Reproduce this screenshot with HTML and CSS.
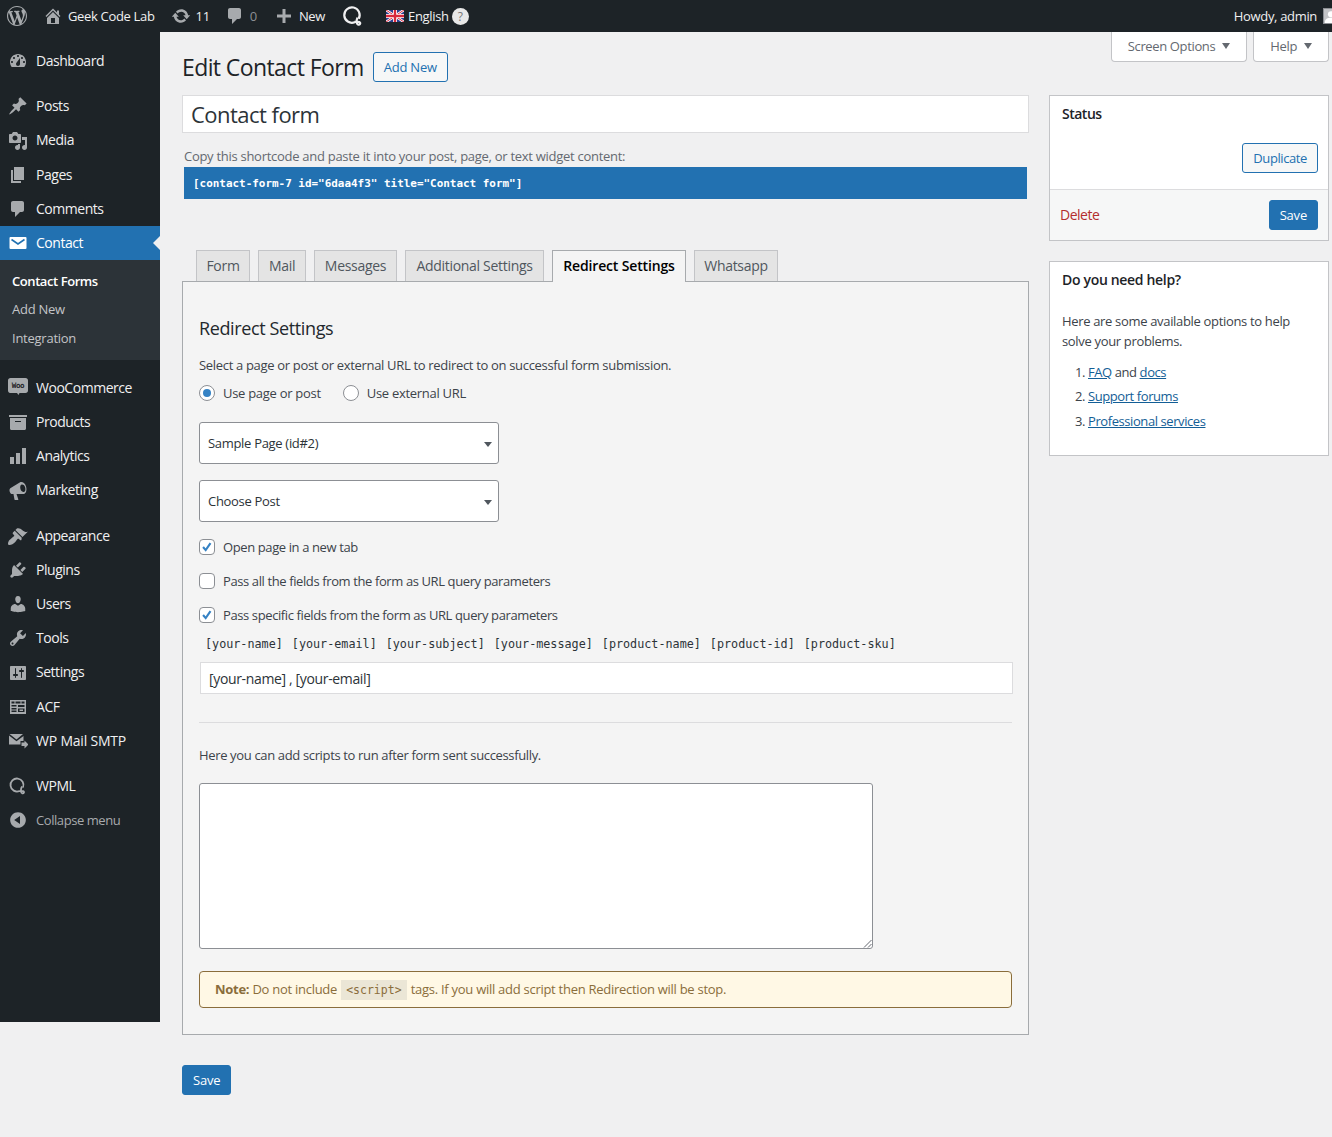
FILE: index.html
```html
<!DOCTYPE html>
<html lang="en">
<head>
  <meta charset="UTF-8" />
  <title>Edit Contact Form</title>
  <link rel="stylesheet" href="styles.css">
</head>
<body>
  <div class="adminbar">
    <div class="bar-left">
      <svg class="bar-logo" viewBox="0 0 20 20"><path d="M20 10c0-5.51-4.49-10-10-10C4.48 0 0 4.49 0 10c0 5.52 4.48 10 10 10 5.51 0 10-4.48 10-10zM7.78 15.37L4.37 6.22c.55-.02 1.17-.08 1.17-.08.5-.06.44-1.13-.06-1.11 0 0-1.45.11-2.37.11-.18 0-.37 0-.58-.01C4.12 2.69 6.87 1.11 10 1.11c2.33 0 4.45.87 6.05 2.34-.68-.11-1.65.39-1.65 1.58 0 .74.45 1.36.9 2.1.35.61.55 1.36.55 2.46 0 1.49-1.4 5-1.4 5l-3.03-8.37c.54-.02.82-.17.82-.17.5-.05.44-1.25-.06-1.22 0 0-1.44.12-2.38.12-.87 0-2.33-.12-2.33-.12-.5-.03-.56 1.2-.06 1.22l.92.08 1.26 3.41zM17.41 10c.24-.64.74-1.87.43-4.25.7 1.29 1.05 2.71 1.05 4.25 0 3.29-1.73 6.24-4.4 7.78.97-2.59 1.94-5.2 2.92-7.78zM6.1 18.09C3.12 16.65 1.11 13.53 1.11 10c0-1.3.23-2.48.72-3.59C3.25 10.3 4.67 14.2 6.1 18.09zm4.03-6.63l2.58 6.98c-.86.29-1.76.45-2.71.45-.79 0-1.57-.11-2.29-.33.81-2.38 1.62-4.74 2.42-7.1z"/></svg>
      <span class="bar-item bar-site"><svg class="bar-icon" viewBox="0 0 20 20"><path d="M16 8.5l1.53 1.53-1.06 1.06L10 4.62l-6.47 6.47-1.06-1.06L10 2.5l4 4v-2h2v4zm-6-2.46l6 5.99V18H4v-5.97zM12 17v-5H8v5h4z"/></svg>Geek Code Lab</span>
      <span class="bar-item bar-updates"><svg class="bar-icon" viewBox="0 0 20 20"><path d="M10.2 3.28c3.53 0 6.43 2.61 6.92 6h2.08l-3.5 4-3.5-4h2.32c-.45-1.97-2.21-3.45-4.32-3.45-1.45 0-2.73.71-3.54 1.78L4.95 5.66C6.23 4.2 8.11 3.28 10.2 3.28zm-.4 13.44c-3.52 0-6.43-2.61-6.92-6H.8l3.5-4c1.17 1.33 2.33 2.67 3.5 4H5.48c.45 1.97 2.21 3.45 4.32 3.45 1.45 0 2.73-.71 3.54-1.78l1.71 1.95c-1.28 1.46-3.15 2.38-5.25 2.38z"/></svg>11</span>
      <span class="bar-item bar-comments"><svg class="bar-icon" viewBox="0 0 20 20"><path d="M5 2h9c1.1 0 2 .9 2 2v7c0 1.1-.9 2-2 2h-2l-5 5v-5H5c-1.1 0-2-.9-2-2V4c0-1.1.9-2 2-2z"/></svg><span class="muted">0</span></span>
      <span class="bar-item bar-new"><svg class="bar-icon" viewBox="0 0 20 20"><path d="M17 8.5v3h-5.5V17h-3v-5.5H3v-3h5.5V3h3v5.5z"/></svg>New</span>
      <svg class="bar-wpml" viewBox="0 0 20 20"><path d="M11.5 15.7A7 7 0 1 1 15.2 12.5"/><path d="M14.2 11.5c-1.4 2.5-1.4 5.5.3 6.3 1.6.6 3-1.5 1.2-2.3-1.3-.5-3.2.2-4.7-.2"/></svg>
      <span class="bar-lang">
        <svg class="flag" viewBox="0 0 18 12"><rect width="18" height="12" fill="#2b3f8f"/><path d="M0 0l18 12M18 0L0 12" stroke="#fff" stroke-width="2.6"/><path d="M0 0l18 12M18 0L0 12" stroke="#d8283c" stroke-width="1"/><path d="M9 0v12M0 6h18" stroke="#fff" stroke-width="4"/><path d="M9 0v12M0 6h18" stroke="#d8283c" stroke-width="2.4"/></svg>
        English<span class="lang-help">?</span>
      </span>
    </div>
    <div class="bar-right">Howdy, admin<span class="avatar"><svg viewBox="0 0 16 16"><rect width="16" height="16" fill="#c3c4c7"/><circle cx="8" cy="6" r="3.5" fill="#fff"/><path d="M1 16c0-5 3-6 7-6s7 1 7 6z" fill="#fff"/></svg></span></div>
  </div>

  <div class="layout">
    <nav class="sidebar">
      <ul class="menu">
        <li class="menu-item"><svg viewBox="0 0 20 20"><path fill-rule="evenodd" d="M3.76 16h12.48c1.1-1.37 1.76-3.11 1.76-5 0-4.42-3.58-8-8-8s-8 3.58-8 8c0 1.89.66 3.63 1.76 5zM10 4c.55 0 1 .45 1 1s-.45 1-1 1-1-.45-1-1 .45-1 1-1zM6 6c.55 0 1 .45 1 1s-.45 1-1 1-1-.45-1-1 .45-1 1-1zm8 0c.55 0 1 .45 1 1s-.45 1-1 1-1-.45-1-1 .45-1 1-1zm-5.37 5.55L12 7v6c0 1.1-.9 2-2 2s-2-.9-2-2c0-.57.24-1.08.63-1.45zM4 10c.55 0 1 .45 1 1s-.45 1-1 1-1-.45-1-1 .45-1 1-1zm12 0c.55 0 1 .45 1 1s-.45 1-1 1-1-.45-1-1 .45-1 1-1z"/></svg>Dashboard</li>
        <li class="menu-sep"></li>
        <li class="menu-item"><svg viewBox="0 0 20 20"><path d="M10.44 3.02l1.82-1.82 6.36 6.35-1.83 1.82c-1.05-.68-2.48-.57-3.41.36l-.75.75c-.92.93-1.04 2.35-.35 3.41l-1.83 1.82-2.41-2.41-2.8 2.79c-.42.42-3.38 2.71-3.8 2.29s1.86-3.39 2.28-3.81l2.79-2.79L4.1 9.36l1.83-1.82c1.05.69 2.48.57 3.4-.36l.75-.75c.93-.92 1.05-2.35.36-3.41z"/></svg>Posts</li>
        <li class="menu-item"><svg viewBox="0 0 20 20"><path fill-rule="evenodd" d="M13 11V4c0-.55-.45-1-1-1h-1.67L9 1H5L3.67 3H2c-.55 0-1 .45-1 1v7c0 .55.45 1 1 1h10c.55 0 1-.45 1-1zM7 4.5c1.38 0 2.5 1.12 2.5 2.5S8.38 9.5 7 9.5 4.5 8.38 4.5 7 5.62 4.5 7 4.5zM14 6h5v10.5c0 1.38-1.12 2.5-2.5 2.5S14 17.88 14 16.5s1.12-2.5 2.5-2.5c.17 0 .34.02.5.05V9h-3V6zm-4 8.05V13h2v3.5c0 1.38-1.12 2.5-2.5 2.5S7 17.88 7 16.5 8.12 14 9.5 14c.17 0 .34.02.5.05z"/></svg>Media</li>
        <li class="menu-item"><svg viewBox="0 0 20 20"><path d="M6 15V2h10v13H6zm-1 1h8v2H3V5h2v11z"/></svg>Pages</li>
        <li class="menu-item"><svg viewBox="0 0 20 20"><path d="M5 2h9c1.1 0 2 .9 2 2v7c0 1.1-.9 2-2 2h-2l-5 5v-5H5c-1.1 0-2-.9-2-2V4c0-1.1.9-2 2-2z"/></svg>Comments</li>
        <li class="menu-item is-current"><svg viewBox="0 0 20 20"><rect x="1.5" y="4" width="17" height="12" rx="1" fill="#fff"/><path d="M3.5 6.5L10 11l6.5-4.5" fill="none" stroke="#2271b1" stroke-width="1.6"/></svg>Contact</li>
        <li class="submenu">
          <div class="sub-item is-active">Contact Forms</div>
          <div class="sub-item">Add New</div>
          <div class="sub-item">Integration</div>
        </li>
        <li class="menu-item"><svg class="woo" viewBox="0 0 20 20"><path d="M2.5 0h15C19 0 20 1 20 2.5v10c0 1.5-1 2.5-2.5 2.5h-6l-1 2-1.5-2h-7C1 15 0 14 0 12.5v-10C0 1 1 0 2.5 0z"/><text x="10" y="10" text-anchor="middle" class="woo-text">Woo</text></svg>WooCommerce</li>
        <li class="menu-item"><svg viewBox="0 0 20 20"><path fill-rule="evenodd" d="M19 3v2H1V3h18zM2 6h16v10.5c0 .83-.67 1.5-1.5 1.5h-13c-.83 0-1.5-.67-1.5-1.5V6zm5 3v1h6V9H7z"/></svg>Products</li>
        <li class="menu-item"><svg viewBox="0 0 20 20"><path d="M18 18V2h-4v16h4zm-6 0V7H8v11h4zm-6 0v-7H2v7h4z"/></svg>Analytics</li>
        <li class="menu-item"><svg viewBox="0 0 20 20"><path fill-rule="evenodd" d="M18.15 5.94c.46 1.62.38 3.22-.02 4.48-.42 1.28-1.26 2.18-2.3 2.48-.16.06-.26.06-.4.06-.06.02-.12.02-.18.02-.06.02-.14.02-.22.02H8.5l1.9 5.5c.02.14-.06.26-.14.34-.08.1-.24.16-.34.16H6.95c-.1 0-.26-.06-.34-.16-.08-.08-.16-.2-.14-.34l-1-5.5H4.25c-.5.06-1.08-.18-1.54-.62s-.88-1.08-1.06-1.88c-.24-.8-.2-1.56-.02-2.2.18-.62.58-1.08 1.06-1.3l9-5.42c.1-.06.18-.1.24-.16.06-.04.14-.08.24-.12.16-.08.28-.12.5-.18 1.04-.3 2.24.1 3.24.98 1 .88 1.8 2.16 2.24 3.78zm-2.24 5.04c.66-.18 1.14-.76 1.36-1.56.22-.8.2-1.8-.1-2.84-.28-1.04-.8-1.92-1.44-2.48-.64-.56-1.38-.84-2.02-.64-.66.2-1.14.78-1.36 1.58-.22.8-.2 1.8.08 2.84.3 1.04.82 1.92 1.46 2.46.64.58 1.36.84 2.02.64z"/></svg>Marketing</li>
        <li class="menu-sep"></li>
        <li class="menu-item"><svg viewBox="0 0 20 20"><path d="M14.48 11.06L7.41 3.99l1.5-1.5c.5-.56 2.3-.47 3.51.32 1.21.8 1.43 1.28 2.91 2.1 1.18.64 2.45 1.26 4.45.85zm-.71.71L6.7 4.7 4.93 6.47c-.39.39-.39 1.02 0 1.41l1.06 1.06c.39.39.39 1.03 0 1.42-.6.6-1.43 1.11-2.21 1.69-.35.26-.7.53-1.01.84C1.43 13.23 0 15.9 0 17.3c0 1.5.5 1.7 1.7 1.7 1.42 0 4-1.43 5.3-2.77.31-.31.58-.66.84-1.01.58-.78 1.09-1.61 1.69-2.21.39-.39 1.03-.39 1.42 0l1.06 1.06c.39.39 1.02.39 1.41 0z"/></svg>Appearance</li>
        <li class="menu-item"><svg viewBox="0 0 20 20"><path d="M13.11 4.36L9.87 7.6 8 5.73l3.24-3.24c.35-.34 1.05-.2 1.56.32.52.51.66 1.21.31 1.55zm-8 1.77l.91-1.12 9.01 9.01-1.19.84c-.71.71-2.63 1.16-3.82 1.16H6.14L4.9 17.26c-.59.59-1.54.59-2.12 0-.59-.58-.59-1.53 0-2.12l1.24-1.24v-3.88c0-1.13.4-3.19 1.09-3.89zm7.26 3.97l3.24-3.24c.34-.35 1.04-.21 1.55.31.52.51.66 1.21.31 1.55l-3.24 3.25z"/></svg>Plugins</li>
        <li class="menu-item"><svg viewBox="0 0 20 20"><path d="M10 9.25c-2.27 0-2.73-3.44-2.73-3.44C7 4.02 7.82 2 9.97 2c2.16 0 2.98 2.02 2.71 3.81 0 0-.41 3.44-2.68 3.44zm0 2.57L12.72 10c2.39 0 4.52 2.33 4.52 4.53v2.49s-3.65 1.13-7.24 1.13c-3.65 0-7.24-1.13-7.24-1.13v-2.49c0-2.25 1.94-4.48 4.47-4.48z"/></svg>Users</li>
        <li class="menu-item"><svg viewBox="0 0 20 20"><path fill-rule="evenodd" d="M16.68 9.77c-1.34 1.34-3.3 1.67-4.95.99l-5.41 6.52c-.99.99-2.59.99-3.58 0s-.99-2.59 0-3.57l6.52-5.42c-.68-1.65-.35-3.61.99-4.95 1.28-1.28 3.12-1.62 4.72-1.06l-2.89 2.89 2.82 2.82 2.86-2.87c.53 1.58.18 3.39-1.08 4.65zM3.81 16.21c.4.39 1.04.39 1.43 0 .4-.4.4-1.04 0-1.43-.39-.4-1.03-.4-1.43 0-.39.39-.39 1.03 0 1.43z"/></svg>Tools</li>
        <li class="menu-item"><svg viewBox="0 0 20 20"><path fill-rule="evenodd" d="M18 16V4c0-.55-.45-1-1-1H3c-.55 0-1 .45-1 1v12c0 .55.45 1 1 1h14c.55 0 1-.45 1-1zM8 11h1c.55 0 1 .45 1 1s-.45 1-1 1H8v1.5c0 .28-.22.5-.5.5s-.5-.22-.5-.5V13H6c-.55 0-1-.45-1-1s.45-1 1-1h1V5.5c0-.28.22-.5.5-.5s.5.22.5.5V11zm5-2h-1c-.55 0-1-.45-1-1s.45-1 1-1h1V5.5c0-.28.22-.5.5-.5s.5.22.5.5V7h1c.55 0 1 .45 1 1s-.45 1-1 1h-1v5.5c0 .28-.22.5-.5.5s-.5-.22-.5-.5V9z"/></svg>Settings</li>
        <li class="menu-item"><svg viewBox="0 0 20 20"><path fill-rule="evenodd" d="M2 3h16v14H2zM3.5 4.5v2h3v-2zm4 0v2h5v-2zm6 0v2h3v-2zM3.5 8v1.5h5V8zm0 3v1.5h5V11zm0 2.5V15h5v-1.5zM10 8v2h6.5V8zm0 3.5V15h6.5v-3.5zm1.5 1H15V14h-3.5z"/></svg>ACF</li>
        <li class="menu-item is-mail"><svg viewBox="0 0 20 20"><path d="M1.5 3H15L8.5 8.5zM1 4.5l7.5 5.7 7-5.3V10h-3v3.5H1z"/><path d="M13.5 11.5h3v-2l4 4-4 4V15h-3z"/></svg>WP Mail SMTP</li>
        <li class="menu-sep"></li>
        <li class="menu-item"><svg class="wpml-icon" viewBox="0 0 20 20"><path d="M11.5 15A6.5 6.5 0 1 1 15 11.5"/><path d="M14 10.5c-1.5 2.5-1.5 6 .2 6.8 1.6.5 2.6-1.5 1-2.1-1.2-.4-3 .3-4.2-.2"/></svg>WPML</li>
        <li class="menu-item is-collapse"><svg viewBox="0 0 20 20"><path fill-rule="evenodd" d="M10 2.16c4.33 0 7.84 3.51 7.84 7.84s-3.51 7.84-7.84 7.84S2.16 14.33 2.16 10 5.71 2.16 10 2.16zm2 11.72V6.12L6.18 9.97z"/></svg>Collapse menu</li>
      </ul>
    </nav>

    <main class="content">
      <div class="screen-tabs">
        <span class="screen-tab">Screen Options<i class="caret"></i></span>
        <span class="screen-tab">Help<i class="caret"></i></span>
      </div>
      <div class="page-head">
        <h1>Edit Contact Form</h1>
        <a class="btn btn-outline">Add New</a>
      </div>

      <div class="columns">
        <div class="col-main">
          <div class="title-input">Contact form</div>
          <p class="shortcode-label">Copy this shortcode and paste it into your post, page, or text widget content:</p>
          <div class="shortcode">[contact-form-7 id="6daa4f3" title="Contact form"]</div>

          <div class="tabs">
            <span class="tab">Form</span>
            <span class="tab">Mail</span>
            <span class="tab">Messages</span>
            <span class="tab">Additional Settings</span>
            <span class="tab is-active">Redirect Settings</span>
            <span class="tab">Whatsapp</span>
          </div>

          <section class="panel">
            <h2>Redirect Settings</h2>
            <p class="intro">Select a page or post or external URL to redirect to on successful form submission.</p>
            <div class="radios">
              <label class="choice"><i class="radio is-on"></i>Use page or post</label>
              <label class="choice"><i class="radio"></i>Use external URL</label>
            </div>
            <div class="select">Sample Page (id#2)<i class="select-caret"></i></div>
            <div class="select">Choose Post<i class="select-caret"></i></div>
            <label class="check-row"><i class="check is-on"><svg viewBox="0 0 16 16"><path d="M3.5 8l3 3.5L12 3.5" /></svg></i>Open page in a new tab</label>
            <label class="check-row"><i class="check"></i>Pass all the fields from the form as URL query parameters</label>
            <label class="check-row"><i class="check is-on"><svg viewBox="0 0 16 16"><path d="M3.5 8l3 3.5L12 3.5" /></svg></i>Pass specific fields from the form as URL query parameters</label>
            <div class="tag-list">
              <span>[your-name]</span><span>[your-email]</span><span>[your-subject]</span><span>[your-message]</span><span>[product-name]</span><span>[product-id]</span><span>[product-sku]</span>
            </div>
            <div class="text-input">[your-name] , [your-email]</div>
            <hr class="divider">
            <p class="script-label">Here you can add scripts to run after form sent successfully.</p>
            <div class="textarea"><svg class="grip" viewBox="0 0 10 10"><path d="M9.5 2L2 9.5M9.5 6L6 9.5"/></svg></div>
            <div class="note"><b>Note:</b> Do not include <code>&lt;script&gt;</code> tags. If you will add script then Redirection will be stop.</div>
          </section>

          <a class="btn btn-primary btn-save">Save</a>
        </div>

        <aside class="col-side">
          <div class="box">
            <h3 class="status-title">Status</h3>
            <div class="status-actions"><a class="btn btn-outline btn-dup">Duplicate</a></div>
            <div class="box-foot">
              <a class="delete">Delete</a>
              <a class="btn btn-primary">Save</a>
            </div>
          </div>
          <div class="box help">
            <h3>Do you need help?</h3>
            <p>Here are some available options to help solve your problems.</p>
            <ol>
              <li><a>FAQ</a> and <a>docs</a></li>
              <li><a>Support forums</a></li>
              <li><a>Professional services</a></li>
            </ol>
          </div>
        </aside>
      </div>
    </main>
  </div>
</body>
</html>
```

FILE: styles.css
```css
* {
  box-sizing: border-box;
}

body {
  margin: 0;
  background: #f0f0f1;
  color: #3c434a;
  font-family: "Open Sans", "Noto Sans", sans-serif;
  font-size: 13px;
  letter-spacing: -0.33px;
}

svg {
  display: block;
}

/* admin bar */
.adminbar {
  height: 32px;
  background: #1d2327;
  color: #f0f0f1;
  display: flex;
  justify-content: space-between;
  align-items: center;
  overflow: hidden;
}

.bar-left,
.bar-right,
.bar-item,
.bar-lang {
  display: flex;
  align-items: center;
}

.bar-logo {
  width: 20px;
  height: 20px;
  margin-left: 7px;
  fill: #a7aaad;
}

.bar-icon {
  width: 20px;
  height: 20px;
  fill: #a7aaad;
  margin-right: 5px;
}

.bar-site {
  margin-left: 16px;
}

.bar-updates {
  margin-left: 16px;
}

.bar-comments {
  margin-left: 15px;
}

.bar-new {
  margin-left: 17px;
}

.muted {
  color: #8c8f94;
}

.bar-wpml {
  width: 22px;
  height: 22px;
  margin-left: 17px;
  fill: none;
  stroke: #f0f0f1;
  stroke-width: 2;
}

.bar-lang {
  margin-left: 22px;
  color: #f0f0f1;
}

.flag {
  width: 18px;
  height: 12px;
  margin-right: 4px;
}

.lang-help {
  width: 17px;
  height: 17px;
  border-radius: 50%;
  background: #e8e8e8;
  color: #777;
  font-size: 12px;
  text-align: center;
  line-height: 17px;
  margin-left: 3px;
}

.bar-right {
  gap: 6px;
  margin-right: -7px;
}

.avatar {
  width: 16px;
  height: 16px;
  border: 1px solid #8c8f94;
  flex: none;
}

/* left menu */
.layout {
  display: flex;
  align-items: flex-start;
}

.sidebar {
  width: 160px;
  height: 990px;
  flex: none;
  background: #1d2327;
  color: #f0f0f1;
}

.menu {
  list-style: none;
  margin: 12px 0 0;
  padding: 0;
  font-size: 14px;
  letter-spacing: -0.47px;
}

.menu-item {
  display: flex;
  align-items: center;
  padding: 8px 0 8px 8px;
  line-height: 18.2px;
  position: relative;
}

.menu-item svg {
  width: 20px;
  height: 20px;
  margin: -2px 8px -2px 0;
  fill: #a7aaad;
  flex: none;
}

.menu-sep {
  height: 11px;
}

.is-current {
  background: #2271b1;
  color: #fff;
}

.is-current::after {
  content: "";
  position: absolute;
  right: 0;
  top: 10px;
  border: 7px solid transparent;
  border-right-color: #f0f0f1;
  border-left: 0;
}

.is-mail {
  letter-spacing: -0.2px;
}

.is-collapse {
  color: #a7aaad;
  font-size: 13px;
  letter-spacing: -0.43px;
}

.woo-text {
  font-family: "DejaVu Sans Mono", monospace;
  font-size: 7.5px;
  font-weight: 700;
  fill: #1d2327;
  letter-spacing: -0.3px;
}

.menu-item .wpml-icon {
  stroke: #a7aaad;
  stroke-width: 1.8;
  fill: none;
}

.submenu {
  background: #2c3338;
  padding: 7px 0 8px;
  font-size: 13px;
  color: #c3c4c7;
  margin-bottom: 11px;
  letter-spacing: -0.25px;
}

.sub-item {
  padding: 5px 12px;
  line-height: 18.2px;
}

.sub-item.is-active {
  color: #fff;
  font-weight: 600;
  letter-spacing: -0.43px;
}

/* main area */
.content {
  flex: 1;
  min-width: 0;
  padding: 0 3px 42px 22px;
  position: relative;
}

.screen-tabs {
  position: absolute;
  top: 0;
  right: 3px;
  display: flex;
  gap: 6px;
}

.screen-tab {
  height: 30px;
  background: #fff;
  border: 1px solid #c3c4c7;
  border-top: 0;
  border-radius: 0 0 4px 4px;
  padding: 0 16px 2px;
  color: #646970;
  display: flex;
  align-items: center;
  letter-spacing: -0.36px;
}

.caret {
  margin-left: 7px;
  border: 4.5px solid transparent;
  border-top: 6px solid #646970;
  border-bottom: 0;
}

.page-head {
  display: flex;
  align-items: center;
  gap: 9px;
  height: 63px;
  padding-top: 7px;
}

h1 {
  margin: 0;
  font-size: 23px;
  font-weight: 400;
  color: #1d2327;
  letter-spacing: -0.6px;
}

.btn {
  display: inline-block;
  height: 30px;
  line-height: 28px;
  padding: 0 10px;
  border-radius: 3px;
  border: 1px solid #2271b1;
  font-size: 13px;
  letter-spacing: -0.2px;
}

.btn-outline {
  color: #2271b1;
  background: #f6f7f7;
}

.btn-dup {
  letter-spacing: -0.4px;
}

.btn-primary {
  color: #fff;
  background: #2271b1;
}

.columns {
  display: grid;
  grid-template-columns: 847px 280px;
  gap: 20px;
  align-items: start;
}

.title-input {
  height: 38px;
  background: #fff;
  border: 1px solid #dcdcde;
  padding: 0 8px;
  font-size: 22px;
  line-height: 37px;
  color: #2c3338;
  letter-spacing: -0.53px;
}

.shortcode-label {
  margin: 13px 2px 0;
  font-size: 13px;
  line-height: 20px;
  height: 21px;
  color: #646970;
  letter-spacing: -0.28px;
}

.shortcode {
  margin: 0 2px;
  height: 32px;
  background: #2271b1;
  color: #fff;
  font-family: "DejaVu Sans Mono", monospace;
  font-weight: 700;
  font-size: 10.95px;
  letter-spacing: 0;
  line-height: 33px;
  padding-left: 9px;
}

.tabs {
  display: grid;
  grid-template-columns: 54px 48px 83px 139px 134px 84px;
  justify-content: start;
  gap: 8px;
  margin: 51px 0 0 14px;
  height: 32px;
  position: relative;
  z-index: 1;
}

.tab {
  border: 1px solid #c3c4c7;
  border-bottom: 0;
  background: #e4e4e4;
  font-size: 14px;
  line-height: 29px;
  color: #50575e;
  height: 31px;
  text-align: center;
  letter-spacing: -0.3px;
}

.tab.is-active {
  background: #f4f4f4;
  color: #000;
  font-weight: 600;
  border-color: #a7aaad;
  height: 32px;
  letter-spacing: -0.15px;
}

.panel {
  background: #f4f4f4;
  border: 1px solid #a7aaad;
  margin-top: -1px;
  padding: 34px 16px 26px;
  height: 754px;
}

.panel h2 {
  margin: 0;
  font-size: 18px;
  line-height: 24px;
  font-weight: 400;
  color: #23282d;
  letter-spacing: -0.38px;
}

.intro {
  margin: 15px 0 0;
  line-height: 20px;
  font-size: 13px;
  letter-spacing: -0.32px;
}

.radios {
  display: flex;
  gap: 22px;
  margin-top: 8px;
  height: 20px;
}

.choice,
.check-row {
  display: flex;
  align-items: center;
  gap: 8px;
  font-size: 13px;
  letter-spacing: -0.39px;
}

.choice {
  letter-spacing: -0.29px;
}

.radio {
  width: 16px;
  height: 16px;
  border: 1px solid #8c8f94;
  border-radius: 50%;
  background: #fff;
  flex: none;
  display: block;
  position: relative;
}

.radio.is-on::after {
  content: "";
  position: absolute;
  left: 3px;
  top: 3px;
  width: 8px;
  height: 8px;
  border-radius: 50%;
  background: #3582c4;
}

.select {
  width: 300px;
  height: 42px;
  margin-top: 16px;
  background: #fff;
  border: 1px solid #8c8f94;
  border-radius: 3px;
  padding: 0 8px;
  line-height: 40px;
  color: #2c3338;
  position: relative;
  font-size: 13px;
  letter-spacing: -0.31px;
}

.radios + .select {
  margin-top: 19px;
}

.select-caret {
  position: absolute;
  right: 6px;
  top: 19px;
  border: 4px solid transparent;
  border-top: 5px solid #50575e;
  border-bottom: 0;
}

.check-row {
  height: 18px;
  margin-top: 16px;
}

.check {
  width: 16px;
  height: 16px;
  background: #fff;
  border: 1px solid #8c8f94;
  border-radius: 4px;
  display: block;
  flex: none;
}

.check svg {
  width: 14px;
  height: 14px;
  fill: none;
  stroke: #3582c4;
  stroke-width: 2.4;
}

.tag-list {
  display: flex;
  gap: 9px;
  margin: 11px 0 0 6px;
  height: 18px;
  line-height: 18px;
  font-family: "DejaVu Sans Mono", monospace;
  font-size: 11.75px;
  letter-spacing: 0;
  color: #2c3338;
  white-space: nowrap;
}

.text-input {
  height: 32px;
  width: 813px;
  margin: 9px 0 0 1px;
  background: #fff;
  border: 1px solid #dcdcde;
  padding: 0 8px;
  line-height: 32px;
  color: #2c3338;
  font-size: 14px;
  letter-spacing: -0.35px;
}

.divider {
  border: 0;
  border-top: 1px solid #dcdcde;
  margin: 28px 0 0;
}

.script-label {
  margin: 22px 0 0;
  line-height: 20px;
  font-size: 13px;
  letter-spacing: -0.35px;
}

.textarea {
  width: 674px;
  height: 166px;
  margin-top: 18px;
  background: #fff;
  border: 1px solid #8c8f94;
  border-radius: 3px;
  position: relative;
}

.grip {
  position: absolute;
  right: 0;
  bottom: 0;
  width: 10px;
  height: 10px;
  fill: none;
  stroke: #646970;
}

.note {
  height: 37px;
  margin-top: 22px;
  background: #fff8e5;
  border: 1px solid #8a6d3b;
  border-radius: 4px;
  padding: 0 15px;
  line-height: 35px;
  color: #8a6d3b;
  font-size: 13px;
  letter-spacing: -0.27px;
}

.note code {
  font-family: "DejaVu Sans Mono", monospace;
  font-size: 11.5px;
  letter-spacing: 0;
  background: #ebe6d6;
  padding: 3px 5px;
  margin: 0 1px;
}

.btn-save {
  margin-top: 30px;
}

/* right column */
.box {
  background: #fff;
  border: 1px solid #c3c4c7;
  margin-bottom: 20px;
}

.box h3 {
  margin: 0;
  padding: 8px 12px 0;
  font-size: 14px;
  line-height: 19px;
  font-weight: 600;
  color: #1d2327;
  letter-spacing: -0.32px;
}

.box .status-title {
  letter-spacing: -0.5px;
}

.status-actions {
  display: flex;
  justify-content: flex-end;
  padding: 0 10px 16px;
  margin-top: 20px;
}

.box-foot {
  display: flex;
  justify-content: space-between;
  align-items: center;
  background: #f6f7f7;
  border-top: 1px solid #dcdcde;
  padding: 10px;
}

.delete {
  color: #b32d2e;
  font-size: 14px;
  letter-spacing: -0.5px;
  padding-bottom: 2px;
}

.help {
  height: 195px;
}

.help p {
  margin: 22px 12px 0;
  line-height: 20px;
  font-size: 13px;
}

.help ol {
  margin: 11px 0 0;
  padding: 0 0 0 38px;
  font-size: 13px;
  letter-spacing: -0.42px;
}

.help li {
  line-height: 20px;
  margin-bottom: 4.4px;
}

.help a {
  color: #135e96;
  text-decoration: underline;
}
```
